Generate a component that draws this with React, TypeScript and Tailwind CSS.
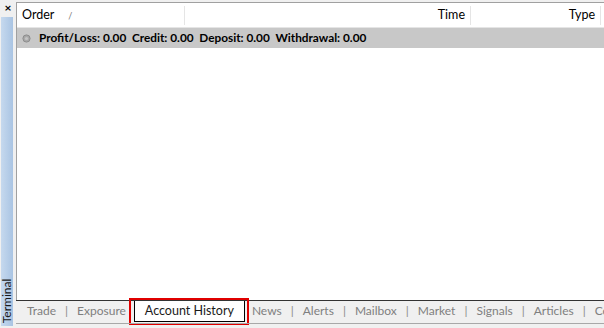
const tabs = ["Trade", "Exposure", "Account History", "News", "Alerts", "Mailbox", "Market", "Signals", "Articles", "Code Base"];

function SummaryIcon() {
  return (
    <svg width="9" height="9" viewBox="0 0 9 9" className="shrink-0">
      <circle cx="4.5" cy="4.5" r="3.6" fill="#a8a8a8" stroke="#8c8c8c" strokeWidth="1" />
      <circle cx="4.5" cy="4.5" r="1.6" fill="#c4c4c4" />
    </svg>
  );
}

export default function App() {
  return (
    <div
      className="flex h-[328px] w-[604px] overflow-hidden bg-[#f0f0f0] text-[12px] text-black"
      style={{ fontFamily: 'Lato, "Open Sans", sans-serif' }}
    >
      {/* side strip */}
      <div className="flex w-4 shrink-0 flex-col">
        <div className="flex h-[17px] items-start justify-center pt-[1px] text-[12px] font-bold leading-[14px]">
          ×
        </div>
        <div className="mb-[2px] ml-[1px] mr-[3px] flex flex-1 flex-col justify-end bg-gradient-to-r from-[#c6d9ee] to-[#a9c4e3]">
          <div className="flex h-[50px] items-center justify-center">
            <span className="-rotate-90 whitespace-nowrap text-[12px] leading-none text-[#1a1a1a]">Terminal</span>
          </div>
        </div>
      </div>

      {/* main panel */}
      <div className="mt-[2px] flex min-w-0 flex-1 flex-col">
        <div className="flex flex-1 flex-col border-l border-t border-[#a0a0a0] bg-white">
          <div className="flex h-[25px] items-center border-b border-[#e5e5e5] pt-[1px] text-[12.5px]">
            <div className="flex w-[168px] items-center border-r border-[#e5e5e5] pl-[5px]">
              <span>Order</span>
              <span className="ml-[14px] text-[9px] text-[#777]">/</span>
            </div>
            <div className="w-[286px] border-r border-[#e5e5e5] pr-[5px] text-right">Time</div>
            <div className="w-[130px] border-r border-[#e5e5e5] pr-[5px] text-right">Type</div>
          </div>
          <div className="flex h-[20px] items-center gap-[8px] bg-[#c8c8c8] pl-[5px] text-[11.8px] font-bold">
            <SummaryIcon />
            <span className="whitespace-pre">Profit/Loss: 0.00  Credit: 0.00  Deposit: 0.00  Withdrawal: 0.00</span>
          </div>
          <div className="flex-1" />
        </div>

        {/* tab bar */}
        <div className="flex h-[23px] items-start border-t border-[#333] bg-[#f0f0f0] pl-[11px]">
          {tabs.map((t, i) => {
            const active = t === "Account History";
            const next = tabs[i + 1];
            const showSep = !active && next !== "Account History" && i < tabs.length - 1;
            if (active) {
              return (
                <div key={t} className="-mt-[3px] ml-[3px] mr-[3px] shrink-0 border-2 border-[#e00000] py-[1px] pl-[3px] pr-[2px]">
                  <div className="whitespace-nowrap border border-t-0 border-black bg-white px-[10px] text-[12.5px] leading-[20px] text-[#1a1a1a]">
                    {t}
                  </div>
                </div>
              );
            }
            return (
              <div key={t} className="flex shrink-0 items-center whitespace-nowrap text-[12px] leading-[20px] text-[#7f7f7f]">
                <span>{t}</span>
                {showSep && <span className="mx-[9px] text-[#8a8a8a]">|</span>}
              </div>
            );
          })}
        </div>
        <div className="h-[1px] bg-[#a8a8a8]" />
        <div className="h-[4px]" />
      </div>
    </div>
  );
}
